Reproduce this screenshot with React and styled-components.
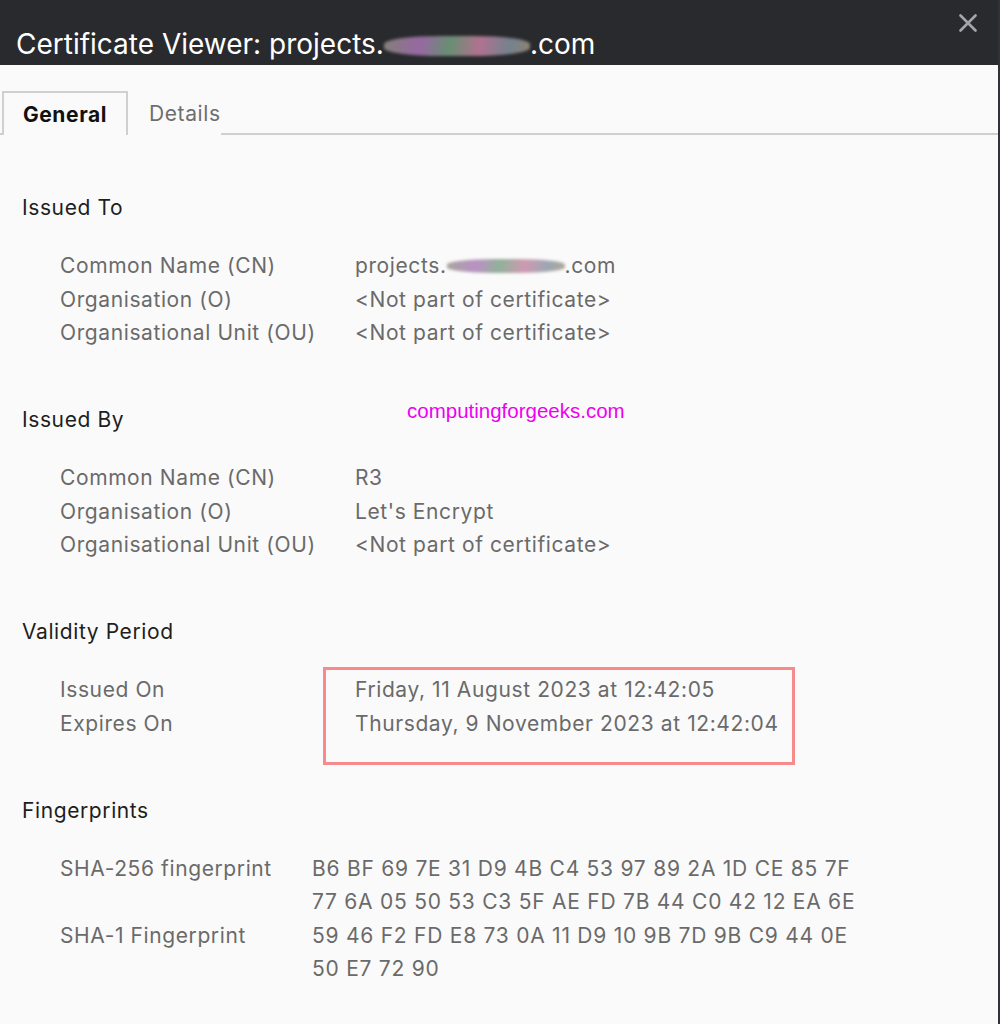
import React from "react";
import styled, { createGlobalStyle } from "styled-components";

const Global = createGlobalStyle`
  html, body { margin: 0; padding: 0; background: #fafafa; }
  body { font-family: Inter, "Noto Sans", sans-serif; }
`;

const Window = styled.div`
  position: relative;
  width: 1000px;
  height: 1024px;
  background: #fafafa;
  border-right: 2px solid #2f3236;
  box-sizing: border-box;
  overflow: hidden;
`;

const TitleBar = styled.div`
  height: 65px;
  background: #292a2e;
  display: flex;
  align-items: flex-end;
  justify-content: space-between;
  padding: 0 0 0 16px;
  box-sizing: border-box;
`;

const Title = styled.div`
  color: #ffffff;
  font-size: 28px;
  letter-spacing: 0;
  line-height: 34px;
  padding-bottom: 4px;
  display: flex;
  align-items: center;
`;

const Smudge = styled.span`
  display: inline-block;
  width: ${(p) => p.$w}px;
  height: ${(p) => p.$h}px;
  margin-top: ${(p) => p.$dy || 0}px;
  border-radius: 40%;
  background: linear-gradient(100deg, #8c8a7f, #a46fb0 25%, #6f9a7a 45%, #c07a9a 65%, #7d8c9a 85%, #9a8c7a);
  filter: blur(1.5px);
  opacity: ${(p) => p.$o || 0.9};
`;

const CloseButton = styled.button`
  align-self: flex-start;
  margin: 14px 21px 0 0;
  background: none;
  border: none;
  padding: 0;
  width: 18px;
  height: 18px;
  display: flex;
  align-items: center;
  justify-content: center;
`;

const Tabs = styled.div`
  display: flex;
  margin-top: 26px;
  padding-left: 2px;
  border-bottom: 2px solid #cfcfcf;
  height: 44px;
  box-sizing: border-box;
`;

const Tab = styled.div`
  width: ${(p) => (p.$active ? "126px" : "auto")};
  padding: ${(p) => (p.$active ? "0" : "0 0 0 21px")};
  box-sizing: border-box;
  display: flex;
  align-items: center;
  justify-content: center;
  font-size: 21px;
  letter-spacing: 0.6px;
  font-weight: ${(p) => (p.$active ? 700 : 400)};
  color: ${(p) => (p.$active ? "#111" : "#6e6e6e")};
  background: #fafafa;
  border: ${(p) => (p.$active ? "2px solid #d0d0d0" : "none")};
  border-bottom: none;
  height: 44px;
  margin-bottom: -2px;
`;

const Body = styled.div`
  padding: 56px 0 0 22px;
`;

const Section = styled.section`
  margin-bottom: 53.5px;
`;

const Heading = styled.h3`
  margin: 0 0 24px;
  font-size: 21px;
  letter-spacing: 0.6px;
  font-weight: 400;
  line-height: 34px;
  color: #1e1e1e;
`;

const Grid = styled.div`
  display: grid;
  grid-template-columns: ${(p) => p.$label}px auto;
  padding-left: 38px;
`;

const Label = styled.div`
  font-size: 21px;
  letter-spacing: 0.6px;
  line-height: 33.5px;
  color: #6a6a6a;
`;

const Value = styled.div`
  font-size: 21px;
  letter-spacing: ${(p) => (p.$mono ? "0.75px" : "0.6px")};
  line-height: 33.5px;
  color: #6a6a6a;
  display: flex;
  align-items: center;
  white-space: pre-wrap;
`;

const Watermark = styled.div`
  position: absolute;
  left: 407px;
  top: 399px;
  font-family: "Liberation Sans", Arial, sans-serif;
  font-size: 20.5px;
  color: #ee00ee;
`;

const Highlight = styled.div`
  position: absolute;
  left: 323px;
  top: 667px;
  width: 472px;
  height: 98px;
  border: 3px solid #f78b8b;
  box-sizing: border-box;
`;

function Rows({ label, rows, mono }) {
  return (
    <Grid $label={label}>
      {rows.map(([l, v], i) => (
        <React.Fragment key={i}>
          <Label>{l}</Label>
          <Value $mono={mono}>{v}</Value>
        </React.Fragment>
      ))}
    </Grid>
  );
}

export default function App() {
  return (
    <Window>
      <Global />
      <TitleBar>
        <Title>
          Certificate Viewer: projects.
          <Smudge $w={146} $h={20} $dy={4} />
          .com
        </Title>
        <CloseButton aria-label="Close">
          <svg width="18" height="18" viewBox="0 0 18 18">
            <path d="M1.5 1.5 L16.5 16.5 M16.5 1.5 L1.5 16.5" stroke="#a3a7ad" strokeWidth="2.6" strokeLinecap="round" />
          </svg>
        </CloseButton>
      </TitleBar>
      <Tabs>
        <Tab $active>General</Tab>
        <Tab>Details</Tab>
      </Tabs>
      <Body>
        <Section>
          <Heading>Issued To</Heading>
          <Rows
            label={295}
            rows={[
              ["Common Name (CN)", <>projects.<Smudge $w={118} $h={14} $o={0.75} />.com</>],
              ["Organisation (O)", "<Not part of certificate>"],
              ["Organisational Unit (OU)", "<Not part of certificate>"],
            ]}
          />
        </Section>
        <Section>
          <Heading>Issued By</Heading>
          <Rows
            label={295}
            rows={[
              ["Common Name (CN)", "R3"],
              ["Organisation (O)", "Let's Encrypt"],
              ["Organisational Unit (OU)", "<Not part of certificate>"],
            ]}
          />
        </Section>
        <Section>
          <Heading>Validity Period</Heading>
          <Rows
            label={295}
            rows={[
              ["Issued On", "Friday, 11 August 2023 at 12:42:05"],
              ["Expires On", "Thursday, 9 November 2023 at 12:42:04"],
            ]}
          />
        </Section>
        <Section>
          <Heading>Fingerprints</Heading>
          <Rows
            label={252}
            mono
            rows={[
              ["SHA-256 fingerprint", "B6 BF 69 7E 31 D9 4B C4 53 97 89 2A 1D CE 85 7F\n77 6A 05 50 53 C3 5F AE FD 7B 44 C0 42 12 EA 6E"],
              ["SHA-1 Fingerprint", "59 46 F2 FD E8 73 0A 11 D9 10 9B 7D 9B C9 44 0E\n50 E7 72 90"],
            ]}
          />
        </Section>
      </Body>
      <Watermark>computingforgeeks.com</Watermark>
      <Highlight />
    </Window>
  );
}
